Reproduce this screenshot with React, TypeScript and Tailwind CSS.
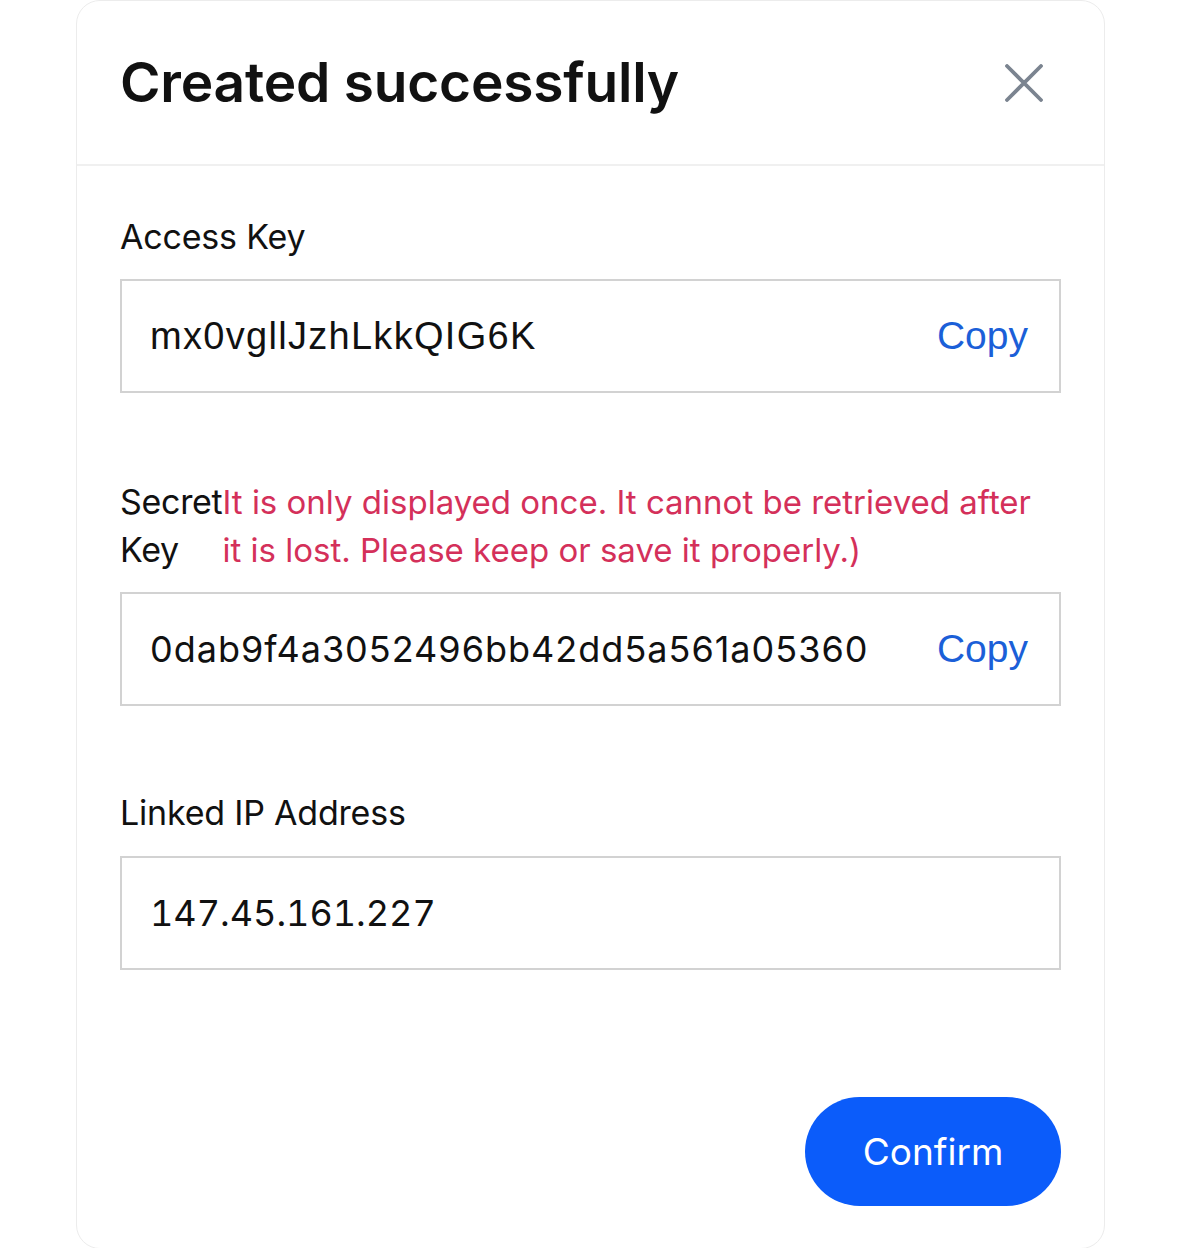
import { useState } from "react";

function Field({ value, copy, kind }: { value: string; copy?: boolean; kind: "key" | "secret" | "ip" }) {
  const cls =
    kind === "key"
      ? "text-[38px] tracking-[1.3px] text-[#111] [font-family:'Liberation_Sans',Arial,sans-serif]"
      : kind === "secret"
        ? "text-[36px] tracking-[1px] text-[#111] [font-family:Inter,sans-serif]"
        : "text-[36px] tabular-nums text-[#111] [font-family:Inter,sans-serif]";

  return (
    <div className="flex h-[114px] items-center justify-between border-2 border-[#d2d2d2] pl-[28px] pr-[31px]">
      <span className={cls}>{value}</span>
      {copy && (
        <button className="text-[39px] text-[#1b5fd8] [font-family:'Liberation_Sans',Arial,sans-serif]">
          Copy
        </button>
      )}
    </div>
  );
}

export default function App() {
  const [open, setOpen] = useState(true);

  return (
    <div className="min-h-screen bg-white [font-family:Inter,sans-serif]">
      {open && (
        <div className="ml-[76px] w-[1029px] rounded-[24px] border border-[#ececec] bg-white">
          <div className="flex h-[165px] items-center justify-between border-b-2 border-[#f0f0f0] pl-[43px] pr-[61px]">
            <h1 className="text-[55px] font-semibold leading-none tracking-[-0.2px] text-[#111]">Created successfully</h1>
            <button onClick={() => setOpen(false)} className="text-[#7b8490]">
              <svg width="38" height="38" viewBox="0 0 38 38" fill="none" stroke="currentColor" strokeWidth="3.8" strokeLinecap="round">
                <path d="M2 2L36 36M36 2L2 36" />
              </svg>
            </button>
          </div>

          <div className="px-[43px] pb-[42px]">
            <div className="mt-[50px] text-[34px] leading-[41px] tracking-[-0.2px] text-[#111]">Access Key</div>
            <div className="mt-[22px]">
              <Field value="mx0vgllJzhLkkQIG6K" copy kind="key" />
            </div>

            <div className="mt-[85px] flex text-[34px] leading-[48px]">
              <div className="w-min shrink-0 tracking-[-0.3px] text-[#111]">Secret Key</div>
              <div className="pr-[20px] text-[33px] leading-[48px] text-[#d4305a]">
                It is only displayed once. It cannot be retrieved after it is lost. Please keep or save it properly.)
              </div>
            </div>
            <div className="mt-[18px]">
              <Field value="0dab9f4a3052496bb42dd5a561a05360" copy kind="secret" />
            </div>

            <div className="mt-[86px] text-[34px] leading-[41px] tracking-[-0.2px] text-[#111]">Linked IP Address</div>
            <div className="mt-[23px]">
              <Field value="147.45.161.227" kind="ip" />
            </div>

            <div className="mt-[127px] flex justify-end">
              <button className="h-[109px] w-[256px] rounded-full bg-[#0b5cfa] text-[37px] text-white">Confirm</button>
            </div>
          </div>
        </div>
      )}
    </div>
  );
}
